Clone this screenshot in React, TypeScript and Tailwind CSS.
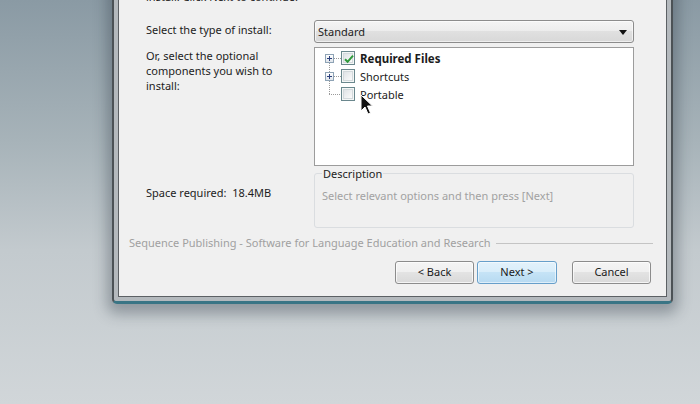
import React from "react";

const PlusBox = () => (
  <span className="block w-[9px] h-[9px] border border-[#8ea3b5] bg-[linear-gradient(#ffffff,#dfe4ea)] relative">
    <span className="absolute left-[1px] top-[3px] w-[5px] h-px bg-[#2b3f7c]" />
    <span className="absolute left-[3px] top-[1px] w-px h-[5px] bg-[#2b3f7c]" />
  </span>
);

const CheckBox = ({ checked }: { checked?: boolean }) => (
  <span className="w-[14px] h-[14px] border border-[#6a878d] bg-[#f4f6f6] p-px flex shrink-0">
    <span className="flex-1 border border-[#d3d9dc] bg-[linear-gradient(135deg,#dfe3e6,#fbfbfb)] relative">
      {checked && (
        <svg className="absolute -left-[1px] -top-[1px]" width="12" height="12" viewBox="0 0 12 12">
          <path d="M2 6.2 L4.6 8.8 L10 2.6" fill="none" stroke="#2f9a3c" strokeWidth="2" />
        </svg>
      )}
    </span>
  </span>
);

// tree connector column: first / middle / last node
const Gutter = ({ kind }: { kind: "first" | "mid" | "last" }) => (
  <div className="w-[26px] h-[18px] relative shrink-0">
    <svg className="absolute inset-0" width="26" height="18">
      {kind !== "first" && <line x1="14.5" y1="0" x2="14.5" y2={kind === "last" ? 9.5 : 5} stroke="#9a9a9a" strokeDasharray="1 1" />}
      {kind !== "last" && <line x1="14.5" y1="14" x2="14.5" y2="18" stroke="#9a9a9a" strokeDasharray="1 1" />}
      <line x1={kind === "last" ? 14 : 19} y1="9.5" x2="26" y2="9.5" stroke="#9a9a9a" strokeDasharray="1 1" />
    </svg>
    {kind !== "last" && (
      <div className="absolute left-[10px] top-[5px]">
        <PlusBox />
      </div>
    )}
  </div>
);

const TreeRow = ({ kind, label, checked, bold }: { kind: "first" | "mid" | "last"; label: string; checked?: boolean; bold?: boolean }) => (
  <div className="flex items-center h-[18px]">
    <Gutter kind={kind} />
    <CheckBox checked={checked} />
    <span className={`ml-[5px] leading-[15px] ${bold ? "font-bold text-[11.5px]" : ""}`}>{label}</span>
  </div>
);

const Button = ({ text, primary }: { text: string; primary?: boolean }) => (
  <button
    className={
      primary
        ? "w-[80px] h-[23px] rounded-[3px] border border-[#679fca] bg-[linear-gradient(#e3f2fb_0%,#d8edfa_50%,#c5e3f6_50%,#b7daf1_100%)] text-[#1a1a1a] shadow-[inset_0_0_0_1px_rgba(255,255,255,0.55)]"
        : "w-[79px] h-[23px] rounded-[3px] border border-[#8c8c8c] bg-[linear-gradient(#f5f5f5_0%,#efefef_50%,#e3e3e3_50%,#d9d9d9_100%)] text-[#1a1a1a] shadow-[inset_0_0_0_1px_rgba(255,255,255,0.7)]"
    }
  >
    {text}
  </button>
);

export default function App() {
  return (
    <div className="w-[700px] h-[404px] relative overflow-hidden bg-[linear-gradient(180deg,#8a9aa4_0%,#a7b3b9_35%,#c3cace_62%,#d1d6d9_100%)] font-['Noto_Sans','Open_Sans',sans-serif] text-[11px] text-[#1c1c1c]">
      {/* dialog window */}
      <div className="absolute left-[112px] top-[-40px] w-[561px] rounded-b-[5px] border-2 border-b-[3px] border-[#4c5256] border-b-[#3a7585] bg-[#b4b9bd] p-[4px] shadow-[0_5px_14px_5px_rgba(40,52,62,0.35)]">
        <div className="border border-[#5c6064] bg-[#f0f0f0] flex flex-col pt-[22px] pb-[12px]">
          <div className="pl-[27px] leading-[15px]">install. Click Next to continue.</div>

          <div className="mt-[16px] flex pl-[27px]">
            <div className="w-[168px] pt-[2px] leading-[15px]">Select the type of install:</div>
            <div className="w-[320px] h-[23px] rounded-[3px] border border-[#8c8c8c] bg-[linear-gradient(#f4f4f4_0%,#ececec_50%,#e0e0e0_50%,#d8d8d8_100%)] flex items-center pl-[3px] pr-[6px] pt-px shadow-[inset_0_0_0_1px_rgba(255,255,255,0.6)]">
              <span className="flex-1">Standard</span>
              <svg width="8" height="5" viewBox="0 0 8 5">
                <path d="M0 0 H8 L4 5 Z" fill="#111" />
              </svg>
            </div>
          </div>

          <div className="mt-[4px] flex pl-[27px]">
            <div className="w-[168px] leading-[15px] pt-px">
              Or, select the optional
              <br />
              components you wish to
              <br />
              install:
            </div>
            <div className="w-[320px] h-[119px] border border-[#9c9c9c] bg-white pt-px">
              <TreeRow kind="first" label="Required Files" checked bold />
              <TreeRow kind="mid" label="Shortcuts" />
              <TreeRow kind="last" label="Portable" />
            </div>
          </div>

          <div className="flex pl-[27px]">
            <div className="w-[168px] pt-[19px] leading-[15px]">Space required:&nbsp; 18.4MB</div>
            <fieldset className="w-[320px] h-[62px] border border-[#dadde0] rounded-[3px] pl-[7px] pt-[7px]">
              <legend className="px-px leading-[15px] text-[#1c1c1c]">Description</legend>
              <div className="leading-[15px] text-[#a2a2a2]">Select relevant options and then press [Next]</div>
            </fieldset>
          </div>

          <div className="mt-[7px] flex items-center pl-[10px] pr-[13px] leading-[15px]">
            <span className="text-[#a0a0a0]">Sequence Publishing - Software for Language Education and Research</span>
            <span className="flex-1 h-px bg-[#c4c4c4] ml-[5px] mt-[2px]" />
          </div>

          <div className="mt-[11px] flex justify-end pr-[15px]">
            <div className="flex gap-[3px]">
              <Button text="< Back" />
              <Button text="Next >" primary />
            </div>
            <div className="ml-[15px]">
              <Button text="Cancel" />
            </div>
          </div>
        </div>
      </div>

      {/* mouse pointer */}
      <svg className="absolute left-[360px] top-[94px]" width="14" height="22" viewBox="0 0 14 22">
        <path d="M1 1 L1 17 L5 13 L8 20 L10.5 19 L7.5 12 L12.5 12 Z" fill="#111" stroke="#fff" strokeWidth="1" strokeLinejoin="round" />
      </svg>
    </div>
  );
}
